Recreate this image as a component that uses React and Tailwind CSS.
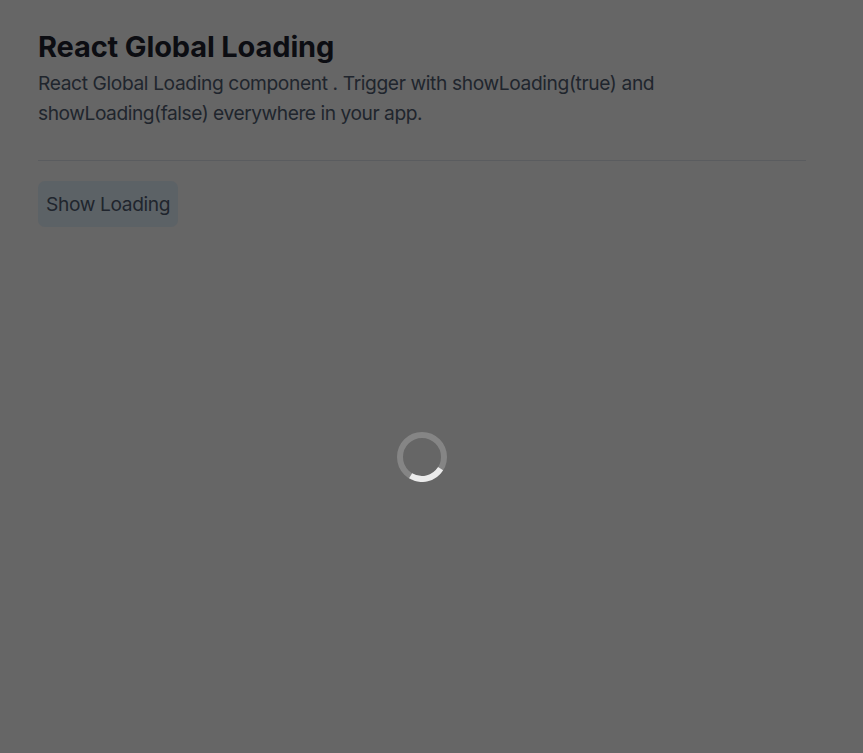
export default function App() {
  return (
    <main className="relative h-[753px] w-[863px] overflow-hidden bg-[#666666] px-[38px] font-['Inter',sans-serif]">
      <h1 className="pt-[29px] text-[29px] leading-[36px] font-bold tracking-[-0.14px] whitespace-nowrap text-[#0c0d12]">React Global Loading</h1>
      <p className="mt-[3px] text-[19.2px] leading-[30px] whitespace-nowrap text-[#20252d]">
        <span className="block tracking-[-0.38px]">React Global Loading component . Trigger with showLoading(true) and</span>
        <span className="block tracking-[-0.46px]">showLoading(false) everywhere in your app.</span>
      </p>
      <hr className="mt-[32px] w-[768px] border-t border-[#5a5c5f]" />
      <button className="mt-5 flex h-[46px] w-[140px] items-center rounded-[7px] bg-[#5c6266] pl-2 text-[19.2px] tracking-[-0.38px] whitespace-nowrap text-[#20252d]">Show Loading</button>
      <div className="absolute top-[432px] left-[397px] h-[50px] w-[50px]" role="status">
        <svg viewBox="0 0 50 50" className="h-full w-full" fill="none" strokeWidth="6">
          <circle cx="25" cy="25" r="22" stroke="#858585" />
          <path d="M43.6 36.7A22 22 0 0 1 13.6 43.8" stroke="#ebebeb" />
        </svg>
      </div>
    </main>
  );
}
